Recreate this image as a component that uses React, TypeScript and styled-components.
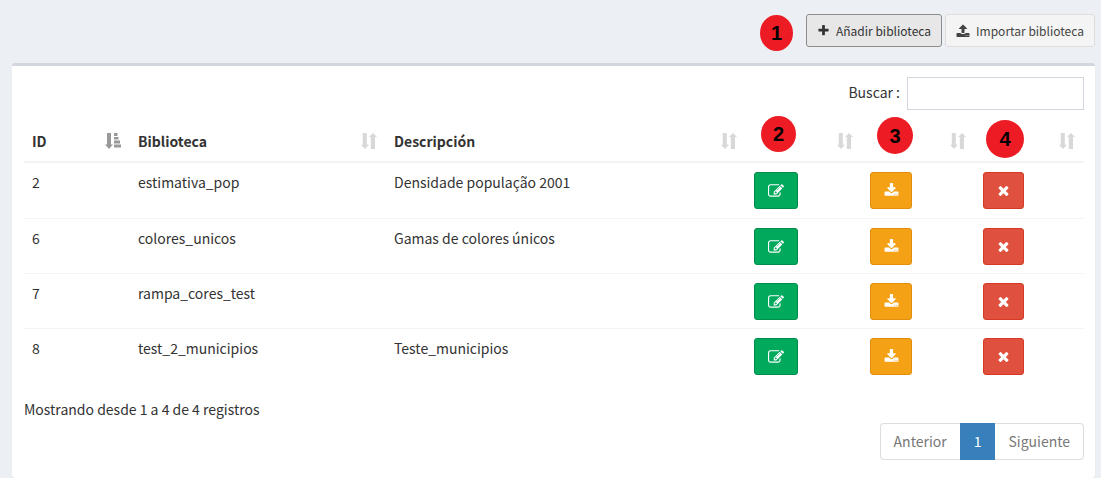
import React from "react";
import styled, { createGlobalStyle } from "styled-components";

const GlobalStyle = createGlobalStyle`
  * { box-sizing: border-box; }
  body {
    margin: 0;
    background: #ecf0f5;
    color: #333;
    font-family: "Noto Sans CJK SC", "Open Sans", sans-serif;
    font-size: 14px;
    line-height: 20px;
  }
  button, input { font: inherit; color: inherit; }
`;

const icons = {
  plus: "M1600 736v192q0 40-28 68t-68 28h-416v416q0 40-28 68t-68 28h-192q-40 0-68-28t-28-68v-416h-416q-40 0-68-28t-28-68v-192q0-40 28-68t68-28h416v-416q0-40 28-68t68-28h192q40 0 68 28t28 68v416h416q40 0 68 28t28 68z",
  upload:
    "M1344 1472q0-26-19-45t-45-19-45 19-19 45 19 45 45 19 45-19 19-45zm256 0q0-26-19-45t-45-19-45 19-19 45 19 45 45 19 45-19 19-45zm128-224v320q0 40-28 68t-68 28h-1472q-40 0-68-28t-28-68v-320q0-40 28-68t68-28h427q21 56 70.5 92t110.5 36h256q61 0 110.5-36t70.5-92h427q40 0 68 28t28 68zm-325-648q-17 40-59 40h-256v448q0 26-19 45t-45 19h-256q-26 0-45-19t-19-45v-448h-256q-42 0-59-40-17-39 14-69l448-448q18-19 45-19t45 19l448 448q31 30 14 69z",
  download:
    "M1344 1344q0-26-19-45t-45-19-45 19-19 45 19 45 45 19 45-19 19-45zm256 0q0-26-19-45t-45-19-45 19-19 45 19 45 45 19 45-19 19-45zm128-224v320q0 40-28 68t-68 28h-1472q-40 0-68-28t-28-68v-320q0-40 28-68t68-28h465l135 136q58 56 136 56t136-56l136-136h464q40 0 68 28t28 68zm-325-569q17 41-14 70l-448 448q-18 19-45 19t-45-19l-448-448q-31-29-14-70 17-39 59-39h256v-448q0-26 19-45t45-19h256q26 0 45 19t19 45v448h256q42 0 59 39z",
  edit: "M888 1184l116-116-152-152-116 116v56h96v96h56zm440-720q-16-16-33 1l-350 350q-17 17-1 33t33-1l350-350q17-17 1-33zm80 594v190q0 119-84.5 203.5t-203.5 84.5h-832q-119 0-203.5-84.5t-84.5-203.5v-832q0-119 84.5-203.5t203.5-84.5h832q63 0 117 25 15 7 18 23 3 17-9 29l-49 49q-14 14-32 8-23-6-45-6h-832q-66 0-113 47t-47 113v832q0 66 47 113t113 47h832q66 0 113-47t47-113v-126q0-13 9-22l64-64q15-15 35-7t20 29zm-96-738l288 288-672 672h-288v-288zm444 132l-92 92-288-288 92-92q28-28 68-28t68 28l152 152q28 28 28 68t-28 68z",
  close:
    "M1490 1322q0 40-28 68l-136 136q-28 28-68 28t-68-28l-294-294-294 294q-28 28-68 28t-68-28l-136-136q-28-28-28-68t28-68l294-294-294-294q-28-28-28-68t28-68l136-136q28-28 68-28t68 28l294 294 294-294q28-28 68-28t68 28l136 136q28 28 28 68t-28 68l-294 294 294 294q28 28 28 68z",
};

const Icon = ({ name, size }: { name: keyof typeof icons; size: number }) => (
  <svg width={size} height={size} viewBox="0 0 1792 1792" fill="currentColor" aria-hidden="true">
    <path d={icons[name]} />
  </svg>
);

const SortIcon = ({ active }: { active?: boolean }) => (
  <svg width="16" height="16" viewBox="0 0 16 16" fill="currentColor" aria-hidden="true">
    {active ? (
      <path d="M2 0h4v11.5h2L4 16 0 11.5h2zM9 0h3.5v3H9zM9 4h4.5v2.5H9zM9 7.5h6v3H9zM9 11.5h7.3v3H9z" />
    ) : (
      <path d="M1.8 0h4v11.7h2.2L4 16 0 11.7h1.8zM12 0l4 4h-2v12h-4.2V4H8z" />
    )}
  </svg>
);

const Page = styled.main`
  padding: 14px 6px 0 12px;
`;

const ActionBar = styled.header`
  display: flex;
  justify-content: flex-end;
  gap: 3px;
  margin-bottom: 16px;
`;

const ToolButton = styled.button<{ $active?: boolean }>`
  display: flex;
  align-items: center;
  gap: 6px;
  height: 33px;
  padding: 0 10px;
  font-size: 12px;
  line-height: 18px;
  color: ${(p) => (p.$active ? "#333" : "#444")};
  background: ${(p) => (p.$active ? "#e7e7e7" : "#f4f4f4")};
  border: 1px solid ${(p) => (p.$active ? "#8c8c8c" : "#ddd")};
  border-radius: 3px;
`;

const Anchor = styled.div`
  position: relative;
`;

const Marker = styled.span<{ $x: number; $y: number; $w: number; $h: number }>`
  position: absolute;
  left: ${(p) => p.$x}px;
  top: ${(p) => p.$y}px;
  width: ${(p) => p.$w}px;
  height: ${(p) => p.$h}px;
  display: flex;
  align-items: center;
  justify-content: center;
  border-radius: 50%;
  background: #ed1c24;
  color: #000;
  font: bold 20px/20px "Liberation Sans", Arial, sans-serif;
`;

const Card = styled.section`
  padding: 11px 11px 18px 12px;
  background: #fff;
  border-top: 3px solid #d2d6de;
  border-radius: 3px;
  box-shadow: 0 1px 1px rgba(0, 0, 0, 0.1);
`;

const Search = styled.label`
  display: flex;
  align-items: flex-start;
  justify-content: flex-end;
  gap: 7px;
  line-height: 30px;
`;

const SearchInput = styled.input`
  width: 177px;
  height: 33px;
  padding: 4px 10px;
  background: #fff;
  border: 1px solid #d2d6de;
  border-radius: 0;
`;

const Table = styled.table`
  width: 100%;
  margin-top: 11px;
  table-layout: fixed;
  border-collapse: separate;
  border-spacing: 0;
`;

const Col = styled.col<{ $w?: number }>`
  width: ${(p) => (p.$w ? `${p.$w}px` : "auto")};
`;

const Th = styled.th`
  position: relative;
  height: 42px;
  padding: 0 9px 0 8px;
  text-align: left;
  font-weight: bold;
  border-bottom: 2px solid #f4f4f4;
`;

const HeadCell = styled.div`
  display: flex;
  align-items: center;
  justify-content: space-between;
`;

const SortButton = styled.button<{ $active?: boolean }>`
  display: flex;
  margin-left: auto;
  padding: 0;
  border: 0;
  background: none;
  color: ${(p) => (p.$active ? "#999" : "#d8d8d8")};
`;

const Row = styled.tr`
  height: 55px;
  & + & td {
    border-top: 1px solid #f4f4f4;
  }
`;

const Td = styled.td`
  padding: 9px 8px 8px;
  vertical-align: top;
  line-height: 20px;
`;

const tones = {
  green: ["#00a95c", "#008d4c"],
  orange: ["#f5a116", "#e08e0b"],
  red: ["#df503f", "#d73925"],
};

const RowButton = styled.button<{ $tone: keyof typeof tones; $w: number }>`
  display: flex;
  align-items: center;
  justify-content: center;
  width: ${(p) => p.$w}px;
  height: 37px;
  padding: 0;
  color: #fff;
  background: ${(p) => tones[p.$tone][0]};
  border: 1px solid ${(p) => tones[p.$tone][1]};
  border-radius: 3px;
`;

const Info = styled.p`
  margin: 16px 0 4px;
`;

const Pagination = styled.nav`
  display: flex;
  justify-content: flex-end;
`;

const PageLink = styled.a<{ $active?: boolean }>`
  padding: 7px 13px;
  line-height: 21px;
  text-decoration: none;
  color: ${(p) => (p.$active ? "#fff" : "#777")};
  background: ${(p) => (p.$active ? "#3880bb" : "#fff")};
  border: 1px solid ${(p) => (p.$active ? "#3880bb" : "#ddd")};
  &:first-child {
    border-right: 0;
    border-radius: 4px 0 0 4px;
  }
  &:last-child {
    border-left: 0;
    border-radius: 0 4px 4px 0;
  }
`;

const columns = [
  { label: "ID", width: 106, active: true },
  { label: "Biblioteca", width: 256 },
  { label: "Descripción" },
  { label: "", width: 116, marker: { n: 2, x: 15, y: -5, w: 35, h: 36 } },
  { label: "", width: 113, marker: { n: 3, x: 15, y: -4, w: 36, h: 37 } },
  { label: "", width: 109, marker: { n: 4, x: 11, y: -1, w: 38, h: 38 } },
];

const libraries = [
  { id: 2, name: "estimativa_pop", description: "Densidade população 2001" },
  { id: 6, name: "colores_unicos", description: "Gamas de colores únicos" },
  { id: 7, name: "rampa_cores_test", description: "" },
  { id: 8, name: "test_2_municipios", description: "Teste_municipios" },
];

export default function App() {
  return (
    <Page>
      <GlobalStyle />
      <ActionBar>
        <Anchor>
          <Marker $x={-46} $y={1} $w={33} $h={36}>1</Marker>
          <ToolButton type="button" $active>
            <Icon name="plus" size={13} />
            Añadir biblioteca
          </ToolButton>
        </Anchor>
        <ToolButton type="button">
          <Icon name="upload" size={14} />
          Importar biblioteca
        </ToolButton>
      </ActionBar>
      <Card>
        <Search>
          Buscar :
          <SearchInput type="search" />
        </Search>
        <Table>
          <colgroup>
            {columns.map((c, i) => (
              <Col key={i} $w={c.width} />
            ))}
          </colgroup>
          <thead>
            <tr>
              {columns.map((c, i) => (
                <Th key={i} scope="col">
                  <HeadCell>
                    {c.label}
                    <SortButton type="button" $active={c.active} aria-label={`Ordenar ${c.label}`}>
                      <SortIcon active={c.active} />
                    </SortButton>
                  </HeadCell>
                  {c.marker && (
                    <Marker $x={c.marker.x} $y={c.marker.y} $w={c.marker.w} $h={c.marker.h}>
                      {c.marker.n}
                    </Marker>
                  )}
                </Th>
              ))}
            </tr>
          </thead>
          <tbody>
            {libraries.map((l) => (
              <Row key={l.id}>
                <Td>{l.id}</Td>
                <Td>{l.name}</Td>
                <Td>{l.description}</Td>
                <Td>
                  <RowButton type="button" $tone="green" $w={44} aria-label="Editar">
                    <Icon name="edit" size={16} />
                  </RowButton>
                </Td>
                <Td>
                  <RowButton type="button" $tone="orange" $w={42} aria-label="Descargar">
                    <Icon name="download" size={15} />
                  </RowButton>
                </Td>
                <Td>
                  <RowButton type="button" $tone="red" $w={41} aria-label="Eliminar">
                    <Icon name="close" size={15} />
                  </RowButton>
                </Td>
              </Row>
            ))}
          </tbody>
        </Table>
        <Info>Mostrando desde 1 a 4 de 4 registros</Info>
        <Pagination aria-label="Paginación">
          <PageLink href="#anterior">Anterior</PageLink>
          <PageLink href="#1" $active aria-current="page">1</PageLink>
          <PageLink href="#siguiente">Siguiente</PageLink>
        </Pagination>
      </Card>
    </Page>
  );
}
